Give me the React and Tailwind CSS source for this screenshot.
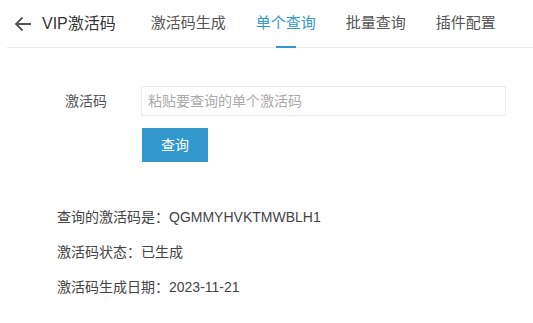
import { useState } from "react";

const font = { fontFamily: '"Liberation Sans", "Noto Sans CJK SC", sans-serif' };

function App() {
  const [tab, setTab] = useState("single");
  const [code, setCode] = useState("");

  const tabs = [
    { key: "gen", label: "激活码生成" },
    { key: "single", label: "单个查询" },
    { key: "batch", label: "批量查询" },
    { key: "plugin", label: "插件配置" },
  ];

  return (
    <div className="w-[533px] h-[323px] bg-white" style={font}>
      {/* header */}
      <div className="ml-[7px] h-[48px] flex items-center border-b border-[#ebebeb]">
        <svg
          className="ml-[7px] w-[18px] h-[18px] text-[#555]"
          viewBox="0 0 18 18"
          fill="none"
          stroke="currentColor"
          strokeWidth="1.8"
        >
          <path d="M17 9H2M8.5 2.5L2 9l6.5 6.5" />
        </svg>
        <span className="ml-[10px] mr-[20px] text-[16px] text-[#333]">VIP激活码</span>
        {tabs.map((t) => (
          <button
            key={t.key}
            onClick={() => setTab(t.key)}
            className={
              "relative h-full px-[15px] text-[15px] " +
              (tab === t.key ? "text-[#3399cc]" : "text-[#555]")
            }
          >
            {t.label}
            {tab === t.key && (
              <span className="absolute left-1/2 -translate-x-1/2 bottom-[-1px] w-[20px] h-[2px] bg-[#3399cc]" />
            )}
          </button>
        ))}
      </div>

      {/* form */}
      <div className="pl-[65px] pt-[38px]">
        <div className="flex items-center">
          <label className="w-[76px] text-[14px] text-[#555]">激活码</label>
          <input
            value={code}
            onChange={(e) => setCode(e.target.value)}
            placeholder="粘贴要查询的单个激活码"
            className="w-[365px] h-[30px] border border-[#ebebeb] px-[6px] text-[14px] text-[#333] placeholder:text-[#aaa] outline-none"
          />
        </div>
        <button className="ml-[77px] mt-[12px] w-[66px] h-[34px] bg-[#3399cc] text-white text-[14px]">
          查询
        </button>
      </div>

      {/* result */}
      <div className="pl-[57px] pt-[38px] text-[14px] text-[#444] leading-[35px]">
        <div>查询的激活码是：QGMMYHVKTMWBLH1</div>
        <div>激活码状态：已生成</div>
        <div>激活码生成日期：2023-11-21</div>
      </div>
    </div>
  );
}

export default App;
